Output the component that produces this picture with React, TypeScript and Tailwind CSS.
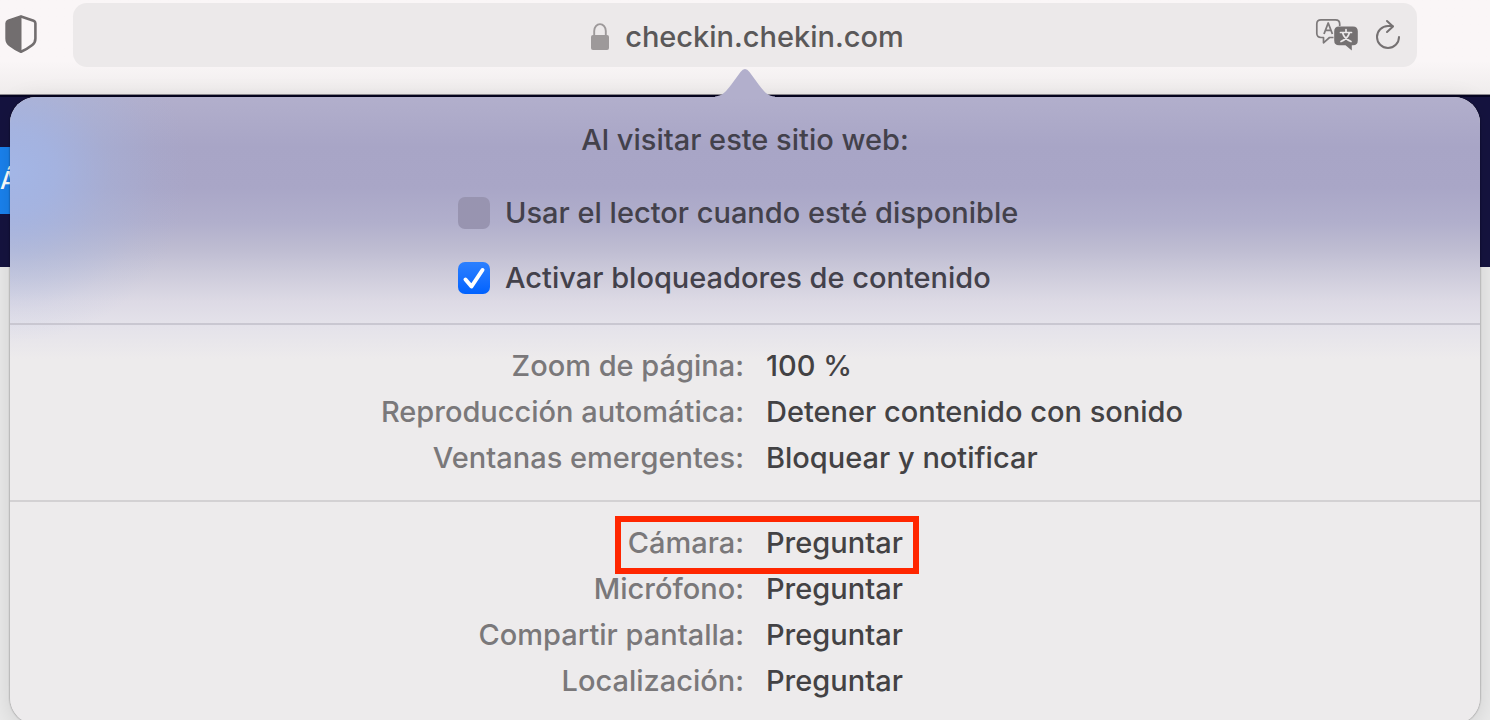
import { useState } from 'react';

const pageSettings = [
  { id: 'zoom', label: 'Zoom de página:', value: '100 %' },
  { id: 'autoplay', label: 'Reproducción automática:', value: 'Detener contenido con sonido' },
  { id: 'popups', label: 'Ventanas emergentes:', value: 'Bloquear y notificar' },
];

const permissions = [
  { id: 'camera', label: 'Cámara:', value: 'Preguntar', highlighted: true },
  { id: 'microphone', label: 'Micrófono:', value: 'Preguntar' },
  { id: 'screen', label: 'Compartir pantalla:', value: 'Preguntar' },
  { id: 'location', label: 'Localización:', value: 'Preguntar' },
];

interface SettingRowProps {
  id: string;
  label: string;
  value: string;
  highlighted?: boolean;
}

function SettingRow({ id, label, value, highlighted }: SettingRowProps) {
  return (
    <div className="relative grid h-[46px] grid-cols-2 items-center">
      <label htmlFor={id} className="pr-px text-right text-[#7a787a]">
        {label}
      </label>
      <select id={id} defaultValue={value} className="ml-[21px] w-fit appearance-none bg-transparent text-[#434244] outline-none">
        <option value={value}>{value}</option>
      </select>
      {highlighted && (
        <div className="pointer-events-none absolute -top-1 -bottom-2 left-1/2 -ml-[130px] w-[304px] border-[6px] border-[#ff2600]" />
      )}
    </div>
  );
}

interface CheckOptionProps {
  label: string;
  checked: boolean;
  onChange: (checked: boolean) => void;
}

function CheckOption({ label, checked, onChange }: CheckOptionProps) {
  return (
    <label className="flex h-[65px] items-center gap-[15px]">
      <span className="grid size-8 shrink-0">
        <input
          type="checkbox"
          checked={checked}
          onChange={(e) => onChange(e.target.checked)}
          className="col-start-1 row-start-1 size-8 appearance-none rounded-[7px] bg-[#9894b0] checked:bg-linear-to-b checked:from-[#2b80ff] checked:to-[#0062ff]"
        />
        {checked && (
          <svg viewBox="0 0 32 32" className="pointer-events-none col-start-1 row-start-1 size-8" fill="none">
            <path d="M7.5 17.5l6 7L24.5 8" stroke="#fff" strokeWidth="4" strokeLinecap="round" strokeLinejoin="round" />
          </svg>
        )}
      </span>
      <span>{label}</span>
    </label>
  );
}

function ShieldIcon() {
  return (
    <svg viewBox="0 0 32 38" className="h-[38px] w-8">
      <path
        d="M16 1.4L28.6 5.7Q30.4 6.4 30.4 8.3V23.5Q30.4 27.5 27.3 30Q22.5 33.8 16 36.8Q9.5 33.8 4.7 30Q1.6 27.5 1.6 23.5V8.3Q1.6 6.4 3.4 5.7Z"
        fill="none"
        stroke="#726e6f"
        strokeWidth="2.6"
        strokeLinejoin="round"
      />
      <path d="M16.5 1.4V36.8Q9.5 33.8 4.7 30Q1.6 27.5 1.6 23.5V8.3Q1.6 6.4 3.4 5.7Z" fill="#726e6f" />
    </svg>
  );
}

function LockIcon() {
  return (
    <svg viewBox="0 0 20 28" className="h-7 w-5" fill="none">
      <path d="M4.2 13V8a5.5 6.5 0 0 1 11.6 0v5" stroke="#9d999a" strokeWidth="1.9" />
      <rect x="1" y="12" width="18" height="15" rx="2" fill="#9d999a" />
    </svg>
  );
}

function TranslateIcon() {
  return (
    <svg viewBox="0 0 44 34" className="h-[34px] w-11" fill="none">
      <path
        d="M18.5 19.5H14.5L8.5 24.8V19.5H6Q1.8 19.5 1.8 15.3V6Q1.8 1.8 6 1.8H20.5Q24.7 1.8 24.7 6V8"
        stroke="#7d797a"
        strokeWidth="1.7"
        strokeLinejoin="round"
      />
      <path d="M9 16L13.2 5L17.4 16M10.5 12.3H16" stroke="#7d797a" strokeWidth="1.8" strokeLinejoin="round" />
      <path
        d="M24 8.5H38Q42.8 8.5 42.8 13.3V22.5Q42.8 27.3 38 27.3H36.8V32.5L30.5 27.3H24Q19.2 27.3 19.2 22.5V13.3Q19.2 8.5 24 8.5Z"
        fill="#757172"
      />
      <path
        d="M25.5 14.5H36.5M31 11.5V14.5M34.5 14.5Q33 20.5 26 23.5M27.5 14.5Q29 20.5 36 23.5"
        stroke="#ece9ea"
        strokeWidth="1.7"
        strokeLinecap="round"
      />
    </svg>
  );
}

function ReloadIcon() {
  return (
    <svg viewBox="0 0 26 32" className="h-8 w-[26px]" fill="none" stroke="#757172" strokeWidth="2" strokeLinecap="round">
      <path d="M24 18A11 11 0 1 1 13 7H17.5" />
      <path d="M12 2L18 7.5L12 13" strokeLinejoin="round" />
    </svg>
  );
}

export default function App() {
  const [reader, setReader] = useState(false);
  const [blockers, setBlockers] = useState(true);

  return (
    <div className="relative h-screen overflow-hidden bg-[#eaeaea] font-['Inter','Liberation_Sans',sans-serif] text-[29px] font-medium text-[#43414b]">
      <header className="flex h-[95px] items-start border-b border-[#8d8a90] bg-linear-to-b from-[#faf6f7] from-65% to-[#efecec] pt-[3px] pr-[73px] pl-[5px]">
        <button type="button" aria-label="Informe de privacidad" className="mt-3 shrink-0">
          <ShieldIcon />
        </button>
        <div className="ml-9 grid h-16 flex-1 grid-cols-[1fr_auto_1fr] items-center rounded-[14px] bg-[#ece9ea]">
          <div className="col-start-2 flex items-center gap-[15px] pt-1 pl-1 text-[#5a5859]">
            <LockIcon />
            <input
              type="text"
              aria-label="Dirección"
              defaultValue="checkin.chekin.com"
              className="field-sizing-content bg-transparent outline-none"
            />
          </div>
          <div className="flex items-center justify-end gap-4 pr-4">
            <button type="button" aria-label="Traducir">
              <TranslateIcon />
            </button>
            <button type="button" aria-label="Recargar">
              <ReloadIcon />
            </button>
          </div>
        </div>
      </header>

      <main>
        <div className="h-[172px] border-t-2 border-[#060522] bg-[#15133f] pt-[50px]">
          <div className="flex h-[67px] w-12 items-center overflow-hidden bg-[#1a82ee] text-2xl text-white">Á</div>
        </div>
      </main>

      {/* site settings popover */}
      <section
        aria-label="Ajustes del sitio web"
        className="absolute inset-x-[10px] top-[97px] rounded-[26px] bg-[#edebec] shadow-[0_0_2px_rgba(0,0,0,0.55),0_4px_24px_rgba(0,0,0,0.12)]"
      >
        <svg viewBox="0 0 60 30" className="absolute -top-[29px] left-1/2 -ml-[30px] h-[30px] w-[60px]">
          <path d="M0 30V28.5C8 28 11 23 16 17L25.5 4Q30 -2 34.5 4L44 17C49 23 52 28 60 28.5V30Z" fill="#b2afcc" />
        </svg>
        <div className="rounded-[26px] bg-[radial-gradient(ellipse_180px_170px_at_0px_75px,#a3b6e6_0%,#a3b6e6cc_25%,#a5b6e066_55%,#a5b6e01a_82%,#a5b6e000_100%),linear-gradient(#b2afcc_0px,#a8a5c6_50px,#a9a6c7_90px,#b1afcc_125px,#bdbbd1_150px,#cfcddc_180px,#dddae5_205px,#e4e2ea_228px,#edebec_262px)]">
          <div className="border-b-2 border-[#c9c7d1] pt-5 pb-[13px]">
            <h1 className="flex h-[50px] items-center justify-center pb-1">Al visitar este sitio web:</h1>
            <div className="mx-auto mt-[13px] w-[574px]">
              <CheckOption label="Usar el lector cuando esté disponible" checked={reader} onChange={setReader} />
              <CheckOption label="Activar bloqueadores de contenido" checked={blockers} onChange={setBlockers} />
            </div>
          </div>
          <div className="border-b-2 border-[#d3d1d3] pt-[18px] pb-[19px]">
            {pageSettings.map((setting) => (
              <SettingRow key={setting.id} {...setting} />
            ))}
          </div>
          <div className="pt-[18px] pb-5">
            {permissions.map((permission) => (
              <SettingRow key={permission.id} {...permission} />
            ))}
          </div>
        </div>
      </section>
    </div>
  );
}
